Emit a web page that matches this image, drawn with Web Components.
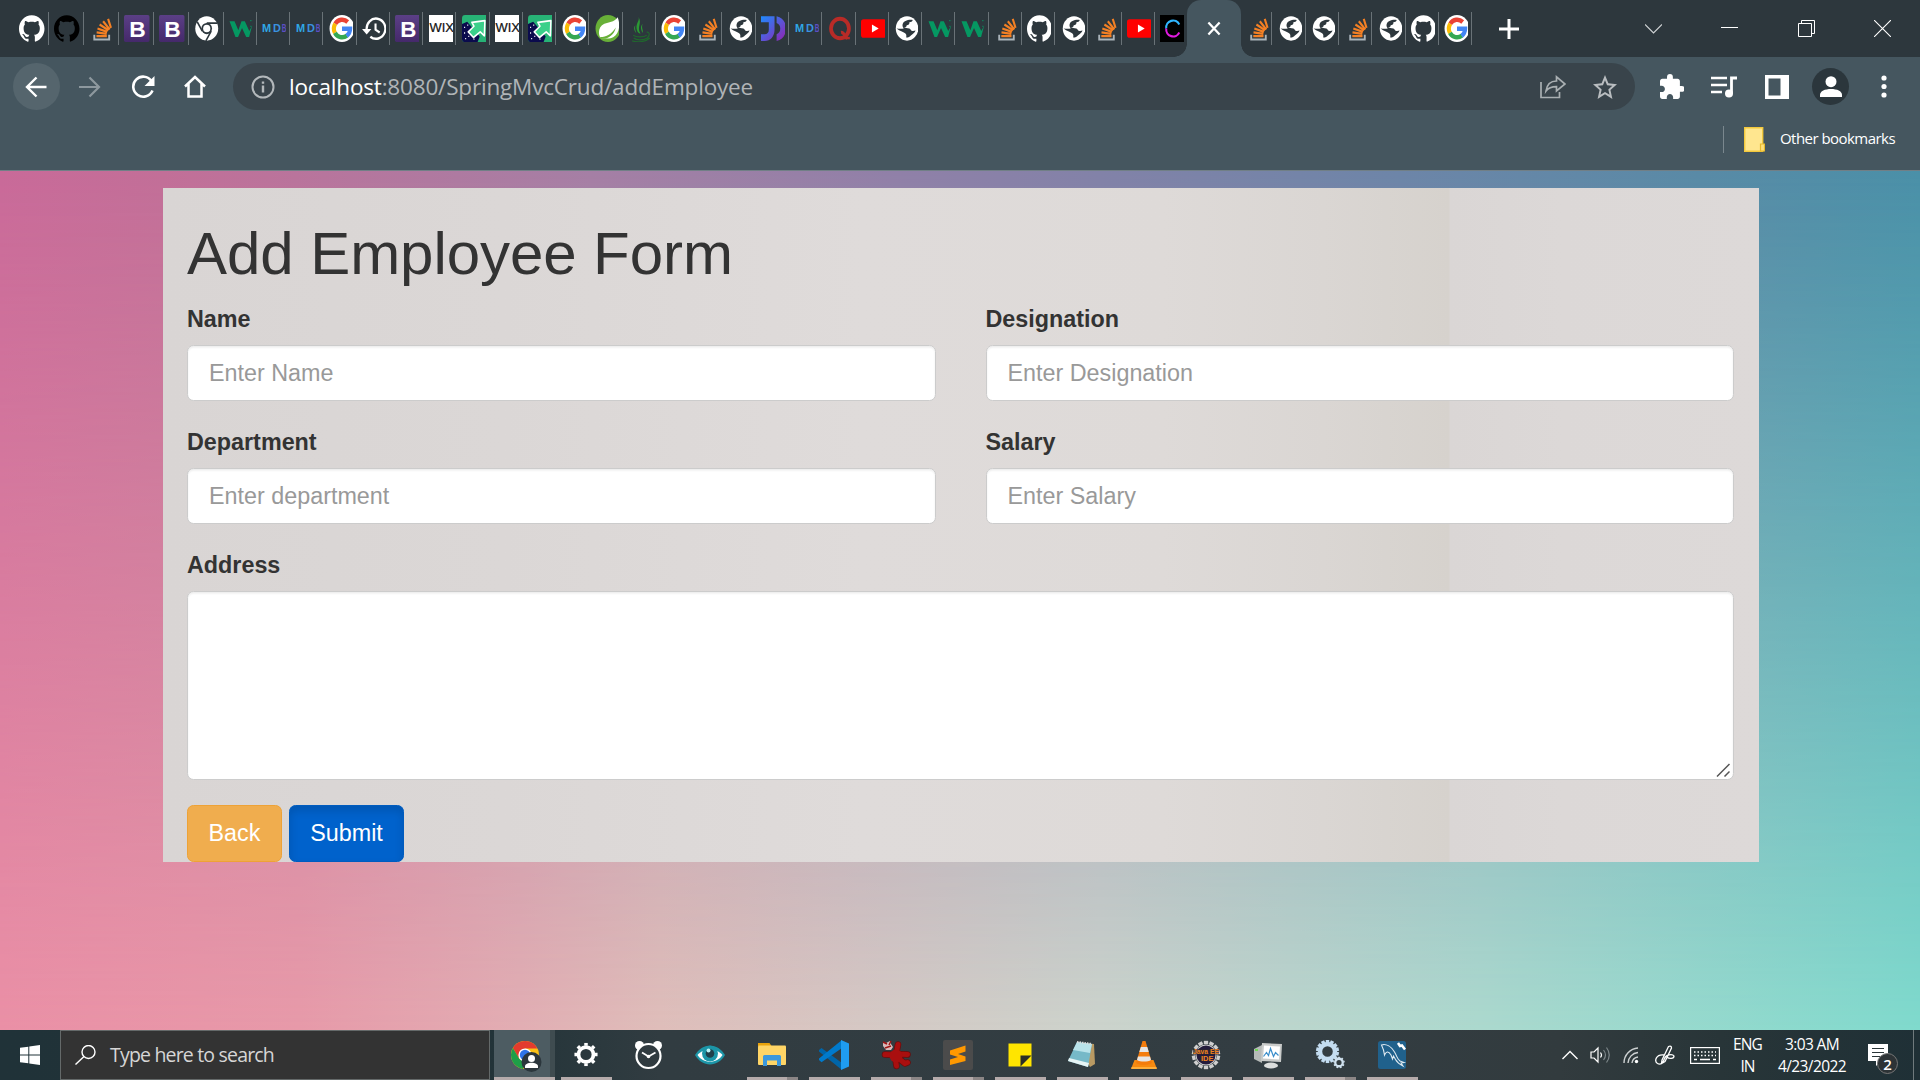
<!DOCTYPE html>
<html lang="en">
<head>
<meta charset="utf-8">
<title>Add Employee</title>
<style>
html,body{margin:0;height:100%;overflow:hidden;background:#45565f}
</style>
</head>
<body>
<desktop-screen></desktop-screen>
<script>
const svg=(w,h,vb,body,extra='')=>`<svg width="${w}" height="${h}" viewBox="${vb}" preserveAspectRatio="none" fill="none" ${extra}>${body}</svg>`;
const define=(name,html,setup)=>customElements.define(name,class extends HTMLElement{
  constructor(){super();this.attachShadow({mode:'open'});}
  connectedCallback(){const t=document.createElement('template');t.innerHTML=typeof html==='function'?html(this):html;this.shadowRoot.replaceChildren(t.content.cloneNode(true));if(setup)setup(this);}
});

/* Text spread over an exact width by letter spacing */
define('fit-text',`<style>:host{display:block;white-space:nowrap;flex:none}span{display:inline-block;white-space:pre}</style><span><slot></slot></span>`,el=>{
  const s=el.shadowRoot.querySelector('span'),w=+el.getAttribute('w'),n=el.textContent.length;
  el.style.width=w+'px';
  s.style.letterSpacing=((w-s.getBoundingClientRect().width)/n)+'px';
});

const GH='M12 .297c-6.63 0-12 5.373-12 12 0 5.303 3.438 9.8 8.205 11.385.6.113.82-.258.82-.577 0-.285-.01-1.04-.015-2.04-3.338.724-4.042-1.61-4.042-1.61C4.422 18.07 3.633 17.7 3.633 17.7c-1.087-.744.084-.729.084-.729 1.205.084 1.838 1.236 1.838 1.236 1.07 1.835 2.809 1.305 3.495.998.108-.776.417-1.305.76-1.605-2.665-.3-5.466-1.332-5.466-5.93 0-1.31.465-2.38 1.235-3.22-.135-.303-.54-1.523.105-3.176 0 0 1.005-.322 3.3 1.23.96-.267 1.98-.399 3-.405 1.02.006 2.04.138 3 .405 2.28-1.552 3.285-1.23 3.285-1.23.645 1.653.24 2.873.12 3.176.765.84 1.23 1.91 1.23 3.22 0 4.61-2.805 5.625-5.475 5.92.42.36.81 1.096.81 2.22 0 1.606-.015 2.896-.015 3.286 0 .315.21.69.825.57C20.565 22.092 24 17.592 24 12.297c0-6.627-5.373-12-12-12';
const T=(x,y,s,f,t,e='')=>`<text x="${x}" y="${y}" font-size="${s}" fill="${f}" font-family="Liberation Sans,Arial,sans-serif" ${e}>${t}</text>`;
const FAV={
 gh:`<path fill="#fff" d="${GH}"/>`,
 ghb:`<path fill="#000" d="${GH}"/>`,
 so:`<path d="M5 17.500v4.200h14v-4.200" stroke="#aab4ba" stroke-width="1.800"/><path d="M7 18.800h9.800M7.200 15.500l9.500 1.200M8 12l9.200 3M10 8.500l8.300 5M13.300 5.500l6.200 7.300M18 3.500l2.700 8" stroke="#f48024" stroke-width="2"/>`,
 bs:`<defs><linearGradient id="b" x1="0" y1="0" x2="0" y2="1"><stop stop-color="#5b3f86"/><stop offset="1" stop-color="#45296b"/></linearGradient></defs><rect width="24" height="24" rx="1.500" fill="url(#b)"/>${T(5,19.200,20,'#fff','B','font-weight="700" textLength="15.500" lengthAdjust="spacingAndGlyphs"')}`,
 chrome:`<circle cx="12" cy="12" r="10.800" fill="#fff"/><circle cx="12" cy="12" r="5" fill="#2d373d"/><circle cx="12" cy="12" r="3.400" fill="#fff"/><path d="M12 7.200h10M7.800 14.300L3 6M16.200 14.300l-5 8.700" stroke="#2d373d" stroke-width="1.500"/>`,
 w3:`<path d="M.5 5.500h4.800l3.700 8 3-8h3.200l4.300 8.800 2.800-5-3 10.200h-2.800l-4-8-3.800 8H6.200z" fill="#059862"/><path d="M20.500 5h1M23 5h1M23 7.500h1M20.500 10h1M23 10h1" stroke="#059862" stroke-width="1"/>`,
 mdb:`<g font-weight="700">${T(0,15.500,10.500,'#2fa8e6','M')}${T(10.500,15.500,10.500,'#3a92e0','D')}${T(19,15.500,10.500,'#5c4fc4','B','textLength="4.500" lengthAdjust="spacingAndGlyphs"')}</g>`,
 g:`<circle cx="12.500" cy="12" r="12" fill="#fff"/><g stroke-width="4"><path d="M6 7.700A8 8 0 0 1 18 6.200" stroke="#ea4335"/><path d="M6 7.700A8 8 0 0 0 5.700 15.900" stroke="#fbbc05"/><path d="M5.700 15.900A8 8 0 0 0 17.200 18.400" stroke="#34a853"/><path d="M12.500 12.200H20.300A8 8 0 0 1 17 18.500" stroke="#4285f4"/></g>`,
 hist:`<path d="M4.500 13A9 9 0 1 1 8 19.300" stroke="#fff" stroke-width="2.200"/><path d="M0 12.500h9l-4.500 4.800z" fill="#fff"/><path d="M13 7.500v5.500l4 2.500" stroke="#fff" stroke-width="2"/>`,
 wix:`<rect width="26" height="24" fill="#fff"/>${T(.5,15.500,11.500,'#111','WIX','textLength="23.500" lengthAdjust="spacingAndGlyphs" stroke="#111" stroke-width=".2"')}`,
 arrow:`<rect width="26" height="24" rx="3" fill="#27b376"/><path d="M0 8l5-2 12 13-2 5H3a3 3 0 0 1-3-3z" fill="#0b0b4d"/><path d="M9.500 6.500L22 5l-.5 13.500-4-3.500-6.500 5-5-5L11.500 10z" fill="#3ad08a" stroke="#fff" stroke-width="1.500" stroke-linejoin="round"/><path d="M2 11h1M5 9h1M2 16h1M6 19h1M11 21.500h1M3 21h1" stroke="#fff" stroke-width="1.200"/>`,
 spring:`<circle cx="12.500" cy="12" r="12" fill="#68b038"/><path d="M21.800 2c2.500 6 2 14-4 17.500-4 2.300-8 1.200-12.500 1C2.500 16 3.500 10 9 7.800c4.500-1.800 9-.8 12.800-5.800z" fill="#fff"/><path d="M5 19.500c6 0 11-2.500 15-8.500-2 8-9 11-15 9.500z" fill="#68b038"/>`,
 java:`<path d="M10 1.500c2 4-4 6-1 13 1 2 3 2 3 2-4-6 2-9-2-15zM14 8c-2 2-2 4 0 8 1-3-1.500-4 0-8zM7 9c-2 2-1 5 1 7-1-3-1.500-4-1-7z" fill="#2b9a34"/><path d="M5 18c3 2 10 2 13 0M5.500 20.500c3 2.500 10 2 13 0 3-2.500 2-6-.5-5M4 23c5 1.500 13 1 17-2.500" stroke="#20672d" stroke-width="1.100"/>`,
 globe:`<circle cx="12.500" cy="12" r="10.800" fill="#fff"/><path d="M11 5.300c2-.8 5-1.500 7-.8-.3 1.500-1.800 1.800-3.200 2 .2 2-1 2.500-2.600 2.600 0 1.400-1 1.800-2.500 1.600 1 1 3 .8 5 1.300 1.500.4 1.500 2.500 3.600 2.200l2.400-.5c-.5 2-3 3-4.500 4.500s-2.800 2-4.500 1.800c.5-2 0-3-1-3.700-2-1.300-5-2-8.200-4.300 2 0 5 .8 7-.3C8 11 7 7 11 5.300z" fill="#2d373d"/>`,
 jd:`<defs><linearGradient id="j" x1="0" y1="0" x2="1" y2="1"><stop stop-color="#1e8bff"/><stop offset="1" stop-color="#9421b0"/></linearGradient></defs><path d="M0 1h13v12c0 6-4 10-9.500 10H0v-6h3.500c2.500 0 4-1.500 4-4V6.500H0zM15 1c6 1 9 5.500 9 11s-3 10-9 11v-6c2.500-.8 3.500-2.500 3.500-5S17.500 8 15 7z" fill="url(#j)"/>`,
 quora:`<circle cx="11.500" cy="12" r="8.600" stroke="#b92b27" stroke-width="3.600"/><path d="M11 20.500h10" stroke="#b92b27" stroke-width="2.200"/><path d="M12.500 15.500c3-.5 4 4.500 6 5" stroke="#b92b27" stroke-width="3"/>`,
 yt:`<rect y="3.800" width="24.200" height="16.400" rx="2.500" fill="#f00"/><path d="M10.500 8.500v7l6.500-3.500z" fill="#fff"/>`,
 c:`<rect width="26" height="24" fill="#000"/><path d="M18.500 8.500A6.600 6.300 0 0 0 6 12" stroke="#2fb6ff" stroke-width="2"/><path d="M6 12a6.600 6.300 0 0 0 12.500 3.500" stroke="#e01adf" stroke-width="2"/>`
};
define('fav-tab',el=>{const w=el.getAttribute('w'),big=+w>34;return `<style>
:host{display:flex;box-sizing:border-box;width:${w}px;height:57px;align-items:center;flex:none;position:relative}
.i{width:${big?26:24}px;height:27px;overflow:hidden;margin-left:5.500px;flex:none;display:flex}
svg{flex:none}
.s{width:1px;height:33px;background:#697277;margin-left:auto}
</style><div class="i">${svg(big?26:25.500,27,'0 0 24.500 24',FAV[el.getAttribute('icon')])}</div>${el.hasAttribute('last')?'':'<div class="s"></div>'}`});

define('tab-strip',()=>{
 const a=['gh','ghb','so','bs','bs','chrome'],
 b='w3 mdb mdb g hist bs wix arrow wix arrow g spring java g so globe jd mdb quora yt globe w3 w3 so gh globe so yt'.split(' '),
 c='so globe globe so globe gh g'.split(' ');
 return `<style>
:host{display:flex;height:57px;background:#2d373d;align-items:center;padding-left:13.500px;box-sizing:border-box;width:1920px}
.act{width:54px;height:57px;flex:none;background:#45565f;border-radius:14px 14px 0 0;display:flex;align-items:center;justify-content:center;position:relative}
.act::before,.act::after{content:"";position:absolute;bottom:0;width:13px;height:13px}
.act::before{left:-13px;background:radial-gradient(circle at 0 0,transparent 12.500px,#45565f 13px)}
.act::after{right:-13px;background:radial-gradient(circle at 100% 0,transparent 12.500px,#45565f 13px)}
.plus{margin-left:27px;flex:none;display:flex}
.win{margin-left:auto;display:flex;align-items:center;padding-right:29px;height:48px;width:246px;flex:none;justify-content:space-between;box-sizing:content-box}
svg{flex:none}
</style>${a.map(i=>`<fav-tab w="35" icon="${i}"></fav-tab>`).join('')}${b.map(i=>`<fav-tab w="33.280" icon="${i}"></fav-tab>`).join('')}<fav-tab w="32" icon="c" last></fav-tab><div class="act">${svg(14,15,'0 0 15 16','<path d="M1.500 1.500l12 13M13.500 1.500l-12 13" stroke="#fff" stroke-width="2.400"/>')}</div>${c.map((i,n)=>`<fav-tab w="${n?33.300:31.500}" icon="${i}"></fav-tab>`).join('')}<div class="plus">${svg(20,20,'0 0 20 20','<path d="M10 0v20M0 10h20" stroke="#fff" stroke-width="3"/>')}</div>
<div class="win">${svg(17,17,'0 0 17 17','<path d="M0 4.500l8.500 8.500L17 4.500" stroke="#cfd3d5" stroke-width="1.200"/>')}${svg(17,17,'0 0 17 17','<path d="M0 7.500h17" stroke="#fff"/>')}${svg(17,17,'0 0 17 17','<path d="M.5 3.500h13v13H.5zM3.500 3.500v-3h13v13h-3" stroke="#fff"/>')}${svg(17,17,'0 0 17 17','<path d="M0 0l17 17M17 0L0 17" stroke="#fff" stroke-width="1.100"/>')}</div>`});

define('tool-bar',`<style>
:host{display:flex;flex-direction:column;height:114px;box-sizing:border-box;background:#45565f;border-bottom:1px solid #717f86;font-family:"Open Sans","Noto Sans",sans-serif}
.row{display:flex;align-items:center;height:47px;margin-top:6px;padding-left:13px}
.back{width:47px;height:47px;border-radius:50%;background:#55656d;display:flex;align-items:center;justify-content:center}
.back svg{margin-right:1px}
.omni{width:1402px;height:47px;border-radius:24px;background:#39444b;margin-left:27px;display:flex;align-items:center;box-sizing:border-box;padding:0 18px 0 18px;flex:none}
fit-text.u{font-size:22.500px;color:#b0b4b7;line-height:47px}
.h{color:#fff}.acts{margin-left:auto;display:flex;gap:27px;align-items:center}
.right{display:flex;align-items:center;margin-left:25px}
.av{width:37px;height:37px;border-radius:50%;background:#2b363c;display:flex;align-items:center;justify-content:center;margin:0 32px 0 23px}
.bm{display:flex;align-items:center;justify-content:flex-end;height:27px;margin-top:16px;padding-right:24px;font-size:15px;color:#fff}
.bm i{width:1px;height:27px;background:#7a878e;margin-right:20px}
.bm svg{margin-right:15px}
.bm fit-text{margin:-3px 1px 0 0}
svg{flex:none}
</style>
<div class="row"><div class="back">${svg(22,22,'0 0 22 22','<path d="M21.500 11H2M11.500 1.500L2 11l9.500 9.500" stroke="#fff" stroke-width="2.400"/>')}</div>
<div style="margin-left:19px;display:flex">${svg(22,22,'0 0 22 22','<path d="M0 11h20M10.500 1.500L20 11l-9.500 9.500" stroke="#8d989e" stroke-width="2.200"/>')}</div>
<div style="margin-left:30px;display:flex">${svg(24,24,'0 0 24 24','<path d="M20.500 6A10 10 0 1 0 21.500 15.500" stroke="#fff" stroke-width="2.600"/><path d="M23.500 1v10h-10z" fill="#fff"/>')}</div>
<div style="margin-left:29px;display:flex">${svg(22,23,'0 0 22 23','<path d="M1 11.500L11 2l10 9.500M4.500 9v12.500h13V9" stroke="#fff" stroke-width="2.500"/>')}</div>
<div class="omni">${svg(24,24,'0 0 24 24','<circle cx="12" cy="12" r="10.500" stroke="#b3b8bb" stroke-width="2"/><path d="M12 10.500v7M12 6.500v2.300" stroke="#b3b8bb" stroke-width="2.400"/>')}<fit-text class="u" w="464" style="margin-left:14px"><span class="h">localhost</span>:8080/SpringMvcCrud/addEmployee</fit-text>
<div class="acts">${svg(26,24,'0 0 26 24','<path d="M1 7v15.500h18.500V17" stroke="#a9afb2" stroke-width="1.700"/><path d="M6 16C7 9 11 6 16.500 6V1.800L25 9l-8.500 7v-4.300c-5 0-8 1-10.500 4.300z" stroke="#a9afb2" stroke-width="1.700"/>')}${svg(24,24,'2 2 20 19','<path d="M22 9.240l-7.190-.62L12 2 9.190 8.630 2 9.240l5.460 4.730L5.820 21 12 17.270 18.180 21l-1.630-7.030L22 9.240zM12 15.400l-3.760 2.270 1-4.280-3.320-2.880 4.380-.38L12 6.100l1.710 4.040 4.380.38-3.320 2.880 1 4.280L12 15.400z" fill="#b9bdc0"/>')}</div></div>
<div class="right">${svg(24,25,'2 1 20.500 21','<path d="M20.500 11H19V7c0-1.100-.9-2-2-2h-4V3.500a2.500 2.500 0 0 0-5 0V5H4c-1.100 0-1.990.9-1.990 2v3.800H3.500c1.490 0 2.700 1.210 2.700 2.700s-1.210 2.700-2.700 2.700H2V20c0 1.100.9 2 2 2h3.800v-1.500c0-1.490 1.210-2.700 2.700-2.700s2.700 1.210 2.700 2.700V22H17c1.100 0 2-.9 2-2v-4h1.500a2.500 2.500 0 0 0 0-5z" fill="#fff"/>')}
<span style="width:27px"></span>${svg(26,22,'0 0 26 22','<path d="M0 2h16M0 9h16M0 16h11" stroke="#fff" stroke-width="2.400"/><circle cx="18" cy="17.500" r="4" fill="#fff"/><path d="M20.500 17.500V2H26" stroke="#fff" stroke-width="2.800"/>')}
<span style="width:28px"></span>${svg(24,24,'0 0 24 24','<path fill-rule="evenodd" d="M0 0h24v24H0zM3.500 3.500v17H15.500v-17z" fill="#fff"/>')}
<div class="av">${svg(22,22,'0 0 22 22','<circle cx="11" cy="5.700" r="5.500" fill="#fff"/><path d="M0 21v-2c0-4 5-6 11-6s11 2 11 6v2z" fill="#fff"/>')}</div>
${svg(6,23,'0 0 6 23','<circle cx="3" cy="3" r="2.600" fill="#fff"/><circle cx="3" cy="11.500" r="2.600" fill="#fff"/><circle cx="3" cy="20" r="2.600" fill="#fff"/>')}</div></div>
<div class="bm"><i></i>${svg(21,25,'0 0 21 25','<path d="M.7.7h18v23.500H.7z" fill="#ffe68f" stroke="#f3c93d" stroke-width="1.400"/><path d="M16.500 17h4v7h-4z" fill="#ffe07a" stroke="#e8b92c" stroke-width="1.200"/>')}<fit-text w="115">Other bookmarks</fit-text></div>`);

define('form-field',el=>`<style>
:host{display:block;flex:1;min-width:0}
label{display:block;font-weight:700;line-height:31px;padding-bottom:2px;margin-bottom:8px;color:#333}
input,textarea{display:block;box-sizing:border-box;width:100%;height:56px;border:1px solid #ccc;border-radius:6.500px;background:#fff;box-shadow:inset 0 1.500px 2px rgba(0,0,0,.075);padding:1px 20px 0 21px;font:inherit;color:#555}
textarea{height:189px;resize:none}
::placeholder{color:#999;opacity:1}
.w{position:relative}.g{position:absolute;right:4px;bottom:3px;display:block}
</style><label>${el.getAttribute('label')}</label>${el.hasAttribute('area')?`<div class="w"><textarea></textarea>${svg(14,14,'0 0 14 14','<path d="M1 13.500L13.500 1M8.500 13.500l5-5" stroke="#555" stroke-width="1.500"/>','class="g"')}</div>`:`<input placeholder="${el.getAttribute('hint')}">`}`);

define('push-button',`<style>
:host{display:flex;box-sizing:border-box;height:57px;align-items:center;justify-content:center;border-radius:6.500px;color:#fff;background:#f0ad4e;border:1px solid #eea236;width:95px;padding-bottom:1px}
:host([primary]){width:115px;background:#0062cc;border-color:#005cbf;box-shadow:inset 0 5px 8px rgba(0,0,0,.125)}
</style><slot></slot>`);

define('employee-form',`<style>
:host{display:flex;flex-direction:column;box-sizing:border-box;width:1596px;height:674px;padding:33px 25px 0 24px;font:23.330px "Liberation Sans",Arial,sans-serif;color:#333;
background:linear-gradient(90deg,#d9d5d4 0,#dbd7d6 340px,#dfdbda 700px,#dedad8 1000px,#dad6d3 1160px,#d6d2cd 1286px,#dad6d5 1287px,#dcd8d7 1400px,#ddd9d8 100%)}
h1{font-size:60px;font-weight:500;line-height:66px;margin:0 0 17px;letter-spacing:-.06px}
.r{display:flex;gap:50px;margin-bottom:26px}
.b{display:flex;gap:7px;margin-top:-1px}
</style><h1>Add Employee Form</h1>
<div class="r"><form-field label="Name" hint="Enter Name"></form-field><form-field label="Designation" hint="Enter Designation"></form-field></div>
<div class="r"><form-field label="Department" hint="Enter department"></form-field><form-field label="Salary" hint="Enter Salary"></form-field></div>
<div class="r"><form-field label="Address" area></form-field></div>
<div class="b"><push-button>Back</push-button><push-button primary>Submit</push-button></div>`);

define('web-page',`<style>
:host{display:flex;position:relative;height:859px;box-sizing:border-box;padding:17px 0 0 163px;background:linear-gradient(90deg,#c96a99 0,#c26f98 163px,#a57fa5 590px,#9080a8 900px,#6d85a8 1400px,#598aa6 1700px,#4a90a8 1920px)}
:host::before{content:"";position:absolute;inset:0;background:linear-gradient(90deg,#ea90a6 0,#e79aa9 300px,#e2aeb3 520px,#dfbeba 660px,#d6c8c4 860px,#ccd3cc 1100px,#acd9ce 1480px,#80dacd 1920px);-webkit-mask-image:linear-gradient(transparent,#000);mask-image:linear-gradient(transparent,#000)}
employee-form{position:relative}
</style><employee-form></employee-form>`);

const gear=(cx,cy,r,n,c,w)=>{let s=`<circle cx="${cx}" cy="${cy}" r="${r*.68}" stroke="${c}" stroke-width="${r*w}"/>`;for(let i=0;i<n;i++){s+=`<path d="M${cx} ${cy-r*.8}V${cy-r*1.050}" stroke="${c}" stroke-width="${r*.32}" transform="rotate(${i*360/n} ${cx} ${cy})"/>`}return s};
const APP={
 gear:`${gear(15,14.500,11,8,'#fff',.34)}`,
 alarm:`<circle cx="6.500" cy="5.500" r="4.500" fill="#fff"/><circle cx="24.500" cy="5.500" r="4.500" fill="#fff"/><circle cx="15.500" cy="16" r="12" fill="#303b40" stroke="#fff" stroke-width="2.200"/><path d="M9 12.500l6.500 4 7-4" stroke="#fff" stroke-width="1.800"/><circle cx="15.500" cy="16.500" r="1.800" fill="#fff"/>`,
 eye:`<path d="M0 15C7 2.500 23 2.500 30 15 23 27.500 7 27.500 0 15z" fill="#1d96a8"/><path d="M2.500 15C8 7.500 22 7.500 27.500 15 22 24 8 24 2.500 15z" fill="#fff"/><circle cx="15" cy="13.500" r="8" fill="#1b95a7"/><circle cx="15" cy="13.500" r="4.300" fill="#1e3f4a"/><circle cx="13.500" cy="10.500" r="2" fill="#b9f2f5"/>`,
 folder:`<path d="M1 3h11.500l2 3H1z" fill="#e9a30c"/><rect x="1" y="5.500" width="28" height="19.500" rx="1" fill="#ffd566"/><path d="M6 26V16.500a1.500 1.500 0 0 1 1.500-1.500h15a1.500 1.500 0 0 1 1.500 1.500V26h-4v-5.500h-10V26z" fill="#3c98dc"/>`,
 vs:`<path d="M0 10l2.500-2L23 23v7L0 11.500z" fill="#0065a9"/><path d="M0 20l2.500 2.200L23 8V0L0 18.500z" fill="#007acc"/><path d="M22 0l8 3.500v23L22 30z" fill="#1f9cf0"/>`,
 splat:`<g stroke="#6a0d0d" stroke-width="6.500" stroke-linecap="round" stroke-linejoin="round"><path d="M15 15L17 4.500M15 15L4 14.500M14 16l1.500 10M16 14l10.500.5M17 18l7 5.500 2.500-1"/></g><g stroke="#a90f0f" stroke-width="5" stroke-linecap="round" stroke-linejoin="round"><path d="M15 15L17 4.500M15 15L4 14.500M14 16l1.500 10M16 14l10.500.5M17 18l7 5.500 2.500-1"/></g><circle cx="15" cy="16" r="6.500" fill="#a90f0f"/><path d="M2 2l3 1 4-2 1 3 2 3-2 3-5 0-3-4z" fill="#d7b9b9"/><path d="M2 2l4 2M10 1L8 5M4 8l6-2" stroke="#a01515" stroke-width="1.500"/>`,
 subl:`<rect width="30" height="30" rx="2" fill="#4b4b4b"/><path d="M7 10.500L22.500 5.500v6L15 14l7.500 2.500v4.500L7 25v-5.500l8-2.500-8-2.500z" fill="#ff9800"/>`,
 note:`<path d="M3.500 3.500h23v23h-23z" fill="#ffe500"/><path d="M15.500 26.500v-11h11z" fill="#2b2f26"/>`,
 pad:`<path d="M10 3l17 1 1 20-5 3z" fill="#b99a63"/><path d="M10 2l15 2-4 23L1 21z" fill="#76b9c8"/><path d="M10 2l15 2-2 9L6 10z" fill="#b9e3ea"/><path d="M1 21l20 6 1-4L2 18z" fill="#e7f4f5"/><path d="M10 2l15 2" stroke="#ddd" stroke-width="2" stroke-dasharray="1.500 1"/>`,
 vlc:`<path d="M5.500 20h19l3.500 9H2z" fill="#f78a10"/><path d="M13.500 1h3L23 23c-3 2.500-13 2.500-16 0z" fill="#f47c0c"/><path d="M11.800 7h6.500l1.500 5h-9.500zM9 16.500h12l1 3.500c-3 2-11 2-14 0z" fill="#e5e5e5"/><path d="M2.500 28h25" stroke="#ffae3a" stroke-width="2"/>`,
 java:`${gear(15,15,13.500,14,'#cfcfcf',.2)}<circle cx="15" cy="15" r="9.500" fill="#241c3c"/><path d="M2 9h26v5.500H2z" fill="#2b2430" opacity=".75"/><g font-weight="700">${T(2,14,7.500,'#f08421','Java EE','textLength="26" lengthAdjust="spacingAndGlyphs"')}${T(10,21,7.500,'#f08421','IDE')}</g>`,
 perf:`<path d="M1 9l8-4v18l-8-4z" fill="#b6bab8"/><path d="M2 10h3" stroke="#59e234" stroke-width="1.500"/><ellipse cx="18" cy="25.500" rx="7" ry="3" fill="#dcdedd"/><path d="M9 3l20 1-1 18-20-1z" fill="#c9cbca"/><path d="M11 5.500l16 1-1 13-16-1z" fill="#fff"/><path d="M10.500 16.500l3-4 2 3 2-7 3 8 2-4 3 3" stroke="#3b8ecb" stroke-width="1.200"/>`,
 gears:`${gear(12.500,11.500,11,14,'#c4ddf1',.4)}${gear(24,22.500,5.500,9,'#cfe1ef',.42)}`,
 mysql:`<rect x="1" y="1" width="28" height="28" rx="2.500" fill="#20618c"/><path d="M4.500 5c5-1.500 10 2 13 7s2 6 5.500 9l4 1.500-3 .5 2 3c-4-2-5.500-3-7.500-6.500l-2-3.500-1 3-1.500-4C11 10 9 12 7.500 15 7 10 6 8 4.500 5z" stroke="#dfeaf1" stroke-width="1.100"/><path d="M21 3l2 3 2-.5 3 4" stroke="#fff" stroke-width="2.500"/>`
};
define('task-app',el=>`<style>
:host{display:flex;flex-direction:column;align-items:center;justify-content:flex-end;width:62px;height:50px;flex:none}
svg{margin-right:2px}
.u{width:51px;height:3px;background:linear-gradient(90deg,#b5abab ${el.hasAttribute('multi')?'40px,#8b8686 40px':'51px'});margin-top:7px;visibility:${el.hasAttribute('idle')?'hidden':'visible'}}
</style>${svg(30,30,'0 0 30 30',APP[el.getAttribute('icon')])}<div class="u"></div>`);

define('task-bar',`<style>
:host{display:flex;height:50px;width:1920px;background:linear-gradient(90deg,#203238 0,#223338 490px,#313c41 660px,#333d42 1300px,#323b3e 1560px,#283538 1720px,#1f3036 1920px);font-family:"Open Sans","Noto Sans",sans-serif;color:#fff;overflow:hidden}
.st{width:60px;display:flex;align-items:center;justify-content:center}
.se{width:430px;box-sizing:border-box;border:1px solid #646969;background:#333;display:flex;align-items:center;padding-left:14px;font-size:19.500px;color:#d6d6d6}
.se fit-text{margin-left:14px;line-height:46px}
.ch{margin-left:4px;width:56px;background:#4d5c62;height:50px;display:flex;flex-direction:column;align-items:center;justify-content:flex-end;border-right:5px solid #3f4c50;background-clip:padding-box;box-sizing:content-box;margin-right:.5px}
.ch svg{margin-left:7px}
.ch div{width:61px;height:3px;background:#b5abab;margin-top:5px;align-self:flex-start}
.tray{margin-left:auto;display:flex;align-items:center;font-size:15.500px;width:358px;flex:none;height:50px}
.t{display:flex;flex-direction:column;align-items:center;line-height:22.500px;margin-top:0}
.n{position:relative;display:flex;margin-left:22px;margin-top:0}
.bd{position:absolute;left:9px;top:9px;width:19px;height:19px;border-radius:50%;background:#2d3336;border:1px solid #777;font-size:15px;font-weight:600;display:flex;align-items:center;justify-content:center}
svg{flex:none}
</style>
<div class="st">${svg(20,20,'0 0 20 20','<path d="M0 2.800L8.300 1.700V9.500H0zM9.300 1.500L20 0v9.500H9.300zM0 10.500h8.300v7.800L0 17.200zM9.300 10.500H20V20L9.300 18.500z" fill="#fff"/>')}</div>
<div class="se">${svg(21,20,'0 0 21 20','<circle cx="13.500" cy="7" r="6.500" stroke="#fff" stroke-width="1.400"/><path d="M9 11.500L.5 19.500" stroke="#fff" stroke-width="1.400"/>')}<fit-text w="164">Type here to search</fit-text></div>
<div class="ch">${svg(32,32,'0 0 32 32','<circle cx="15" cy="15" r="14" fill="#fbc116"/><path d="M2.900 8A14 14 0 0 1 27.500 8.500H15L9 18.500z" fill="#e33b2e"/><path d="M2.900 8l6.200 10.500L15 22l-2 6.900A14 14 0 0 1 2.900 8z" fill="#1e9e48"/><circle cx="15" cy="15" r="6.600" fill="#fff"/><circle cx="15" cy="15" r="5.200" fill="#2f74e8"/><circle cx="21.500" cy="22" r="10" fill="#2b363c"/><circle cx="21.500" cy="18.500" r="3.500" fill="#fff"/><path d="M15 28v-1.500c0-5 13-5 13 0V28z" fill="#fff"/>')}<div></div></div>
<task-app icon="gear"></task-app><task-app icon="alarm" idle></task-app><task-app icon="eye" idle></task-app><task-app icon="folder" multi></task-app><task-app icon="vs"></task-app><task-app icon="splat" multi></task-app><task-app icon="subl" multi></task-app><task-app icon="note"></task-app><task-app icon="pad"></task-app><task-app icon="vlc"></task-app><task-app icon="java"></task-app><task-app icon="perf"></task-app><task-app icon="gears" multi></task-app><task-app icon="mysql"></task-app>
<div class="tray">${svg(16,10,'0 0 16 10','<path d="M.5 9L8 1.500 15.500 9" stroke="#fff" stroke-width="1.400"/>')}
<span style="width:12px"></span>${svg(20,18,'0 0 20 18','<path d="M1 6h3l4-4v14l-4-4H1z" stroke="#fff" stroke-width="1.200"/><path d="M10.500 6.500q2 2.500 0 5" stroke="#fff" stroke-width="1.200"/><path d="M13.500 4q4 5 0 10M16.500 1.500q5.500 7.500 0 15" stroke="#7d8689" stroke-width="1.200"/>')}
<span style="width:13px"></span>${svg(16,17,'0 0 16 17','<path d="M1 16A15 15 0 0 1 15 1M5 16A11 11 0 0 1 15 5.500M9 16a7 7 0 0 1 6-6" stroke="#cdd1d2" stroke-width="1.400"/><circle cx="13.500" cy="14.500" r="1.700" fill="#fff"/>')}
<span style="width:16px"></span>${svg(20,20,'0 0 20 20','<path d="M7 15L13.500 1.500q3-1 3 1.500L10 16.500l-3.500 2zM9 10c-8-1-10 6-6.500 8.500 4 2 6-2 7-5 1-4 8-5 9.500-2.500 0 3-5 3-7 1" stroke="#fff" stroke-width="1.300"/>')}
<span style="width:15px"></span>${svg(30,17,'0 0 30 17','<rect x=".6" y=".6" width="28.800" height="15.800" stroke="#fff" stroke-width="1.200"/><path d="M4 5h22M4 8.500h22" stroke="#fff" stroke-width="1.500" stroke-dasharray="1.500 2"/><path d="M4 12.500h3M10 12.500h10M23 12.500h3" stroke="#fff" stroke-width="1.300"/>')}
<div class="t" style="margin-left:13px"><fit-text w="29">ENG</fit-text><fit-text w="14">IN</fit-text></div>
<div class="t" style="margin-left:16px"><fit-text w="54">3:03 AM</fit-text><fit-text w="68">4/23/2022</fit-text></div>
<div class="n">${svg(20,22,'0 0 20 22','<path d="M0 0h20v17h-7l-5 5v-5H0z" fill="#fff"/><path d="M4 4.500h12M4 8.500h12M4 12.500h8" stroke="#2a3538" stroke-width="1.200"/>')}<div class="bd">2</div></div>
<div style="width:1px;height:50px;background:#6f7a7d;margin-left:25px"></div></div>`);

define('desktop-screen',`<style>:host{display:flex;flex-direction:column;width:1920px;height:1080px;overflow:hidden}</style><tab-strip></tab-strip><tool-bar></tool-bar><web-page></web-page><task-bar></task-bar>`);
</script>
</body>
</html>
